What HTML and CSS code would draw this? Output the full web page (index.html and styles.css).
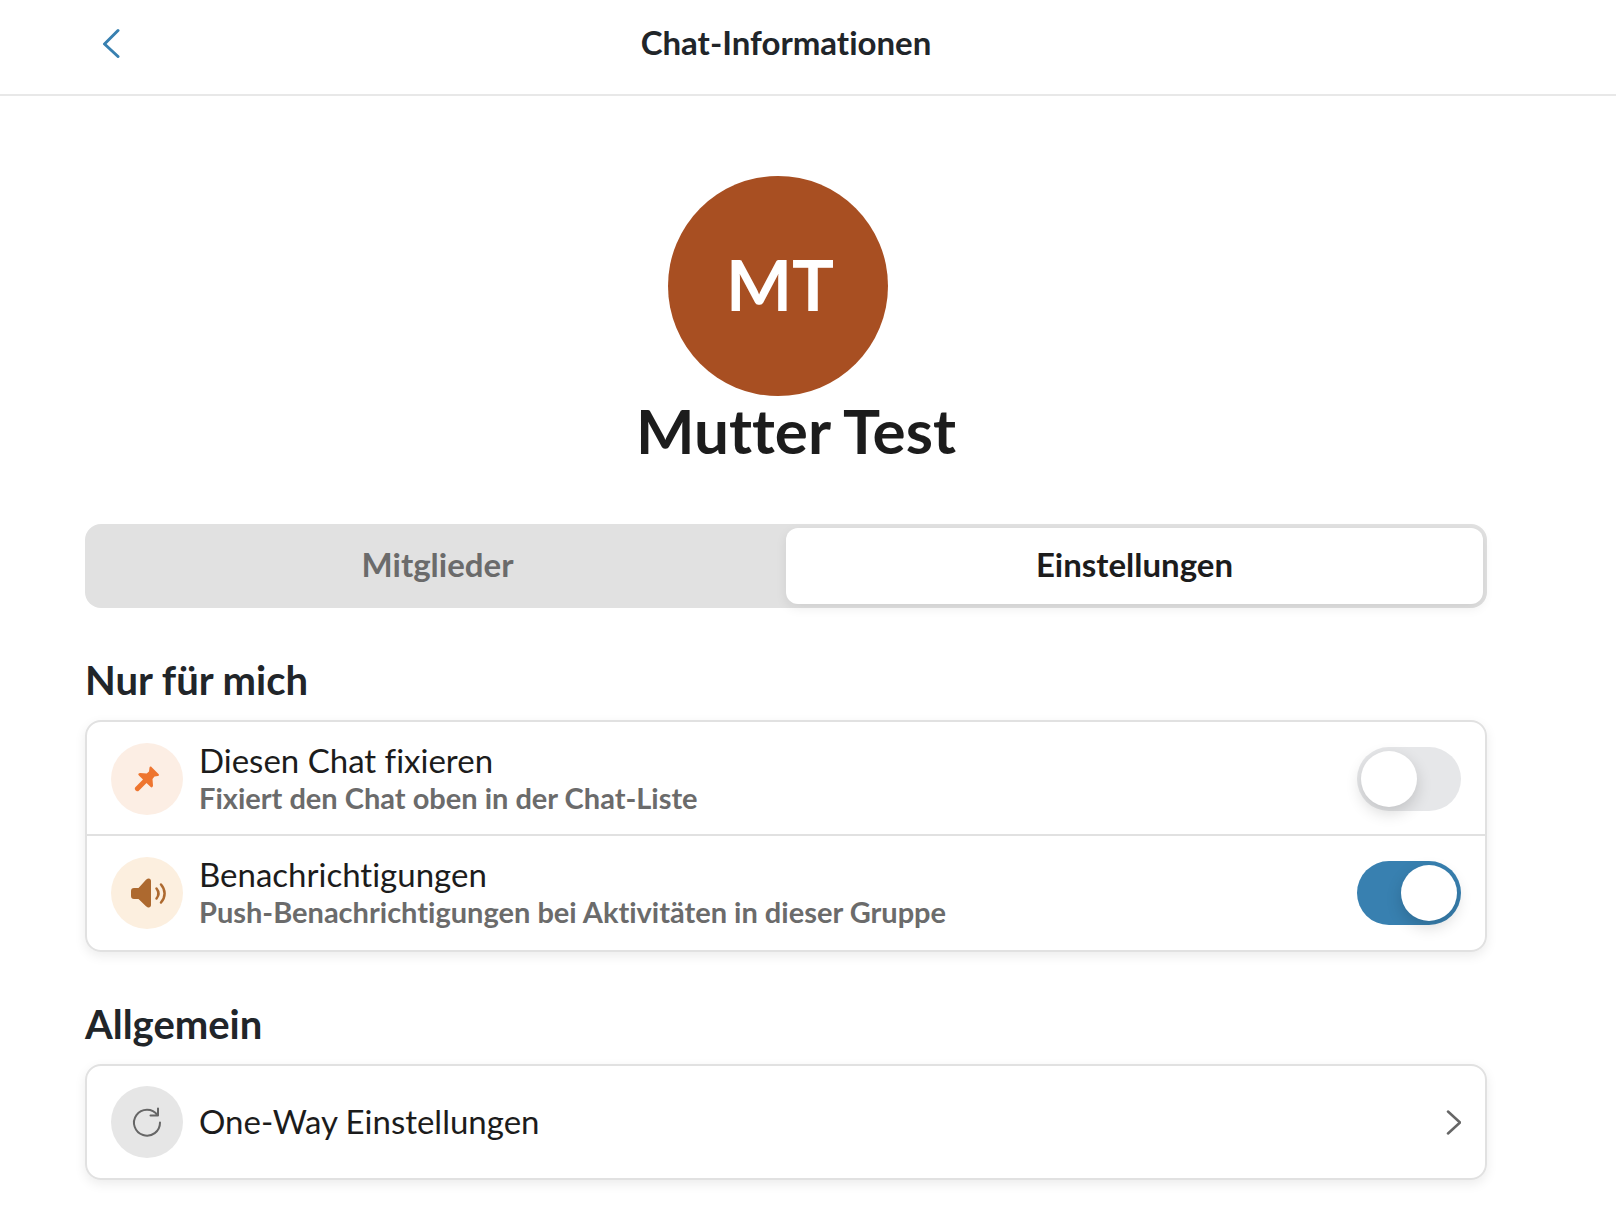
FILE: index.html
```html
<!DOCTYPE html>
<html lang="de">
<head>
  <meta charset="UTF-8">
  <meta name="viewport" content="width=device-width, initial-scale=1.0">
  <title>Chat-Informationen</title>
  <link rel="stylesheet" href="styles.css">
</head>
<body>
  <header class="topbar">
    <button type="button" class="back" aria-label="Zurück">
      <svg width="18" height="30" viewBox="0 0 18 30" fill="none" stroke="currentColor" stroke-width="3" stroke-linecap="round" stroke-linejoin="round">
        <path d="M16 2.500 2.500 16l13.500 12.500"/>
      </svg>
    </button>
    <h1 class="topbar-title">Chat-Informationen</h1>
  </header>

  <main class="content">
    <section class="profile">
      <div class="avatar">MT</div>
      <h2 class="profile-name">Mutter Test</h2>
    </section>

    <div class="tabs" role="tablist">
      <button type="button" class="tab" role="tab" aria-selected="false">Mitglieder</button>
      <button type="button" class="tab active" role="tab" aria-selected="true">Einstellungen</button>
    </div>

    <h3 class="section-title">Nur für mich</h3>
    <div class="card">
      <div class="row">
        <span class="icon icon-pin">
          <svg width="26" height="26" viewBox="0 0 26 26" fill="currentColor">
            <path d="M15.500 1.500c.3-1 1.300-1.200 2-.5l7 7c.8.8.5 1.700-.5 2l-3.500.6-2 2.400.5 6.500c0 1.500-1.300 2.500-2.300 1.500L12.500 17l-7.700 7.700c-1.800 1.800-5.300-1.500-3.500-3.500L9 13.500 4.700 9.200c-1-1 0-2.300 1.500-2.300l6.500.5 2.300-2z"/>
          </svg>
        </span>
        <label class="row-text" for="pin">
          <span class="row-title">Diesen Chat fixieren</span>
          <span class="row-sub">Fixiert den Chat oben in der Chat-Liste</span>
        </label>
        <input type="checkbox" class="switch" id="pin">
      </div>
      <div class="row">
        <span class="icon icon-sound">
          <svg width="32" height="30" viewBox="0 0 32 30">
            <path fill="currentColor" d="M3 10h4.500l7.500-8.200C17.500-.5 20 .5 20 3v24c0 2.500-2.500 3.500-5 1.200L7.500 21H3c-2 0-3-1-3-3v-5c0-2 1-3 3-3z"/>
            <path fill="none" stroke="currentColor" stroke-width="2.500" stroke-linecap="round" d="M25.500 10.500c2.400 3 2.400 7 0 10M30 6.500c4.800 5.500 4.800 12.500 0 18"/>
          </svg>
        </span>
        <label class="row-text" for="notify">
          <span class="row-title">Benachrichtigungen</span>
          <span class="row-sub">Push-Benachrichtigungen bei Aktivitäten in dieser Gruppe</span>
        </label>
        <input type="checkbox" class="switch" id="notify" checked>
      </div>
    </div>

    <h3 class="section-title">Allgemein</h3>
    <div class="card">
      <a href="#" class="row row-link">
        <span class="icon icon-refresh">
          <svg width="30" height="30" viewBox="0 0 30 30" fill="none" stroke="currentColor" stroke-width="2" stroke-linecap="round" stroke-linejoin="round">
            <path d="M28 15.500A13 13 0 1 1 25.500 8M26 1.500v7h-7.500"/>
          </svg>
        </span>
        <span class="row-text">
          <span class="row-title">One-Way Einstellungen</span>
        </span>
        <svg class="chevron" width="16" height="26" viewBox="0 0 16 26" fill="none" stroke="currentColor" stroke-width="2.500" stroke-linecap="round" stroke-linejoin="round">
          <path d="M3 2.500l12 11-12 11"/>
        </svg>
      </a>
    </div>
  </main>
</body>
</html>
```
FILE: styles.css
```css
* {
  box-sizing: border-box;
}
body {
  margin: 0;
  font-family: Lato, sans-serif;
  font-variant-ligatures: none;
  background-color: #fff;
  color: #1c1c1c;
}
h1, h2, h3 {
  margin: 0;
}
button {
  font-family: inherit;
  border: none;
  background: none;
  padding: 0;
  cursor: pointer;
}
.topbar {
  display: grid;
  grid-template-columns: 52px 1fr 52px;
  align-items: center;
  height: 96px;
  padding: 0 129px 8px 85px;
  border-bottom: 2px solid #e8e8e8;
}
.back {
  display: flex;
  justify-content: center;
  align-items: center;
  height: 48px;
  color: #3880b0;
}
.topbar-title {
  padding-bottom: 2px;
  font-size: 33px;
  font-weight: 700;
  line-height: 40px;
  text-align: center;
  color: #212529;
}
.content {
  padding: 80px 129px 44px 85px;
}
.profile {
  display: flex;
  flex-direction: column;
  align-items: center;
}
.avatar {
  display: flex;
  justify-content: center;
  align-items: center;
  width: 220px;
  height: 220px;
  margin-right: 16px;
  padding: 0 0 4px 4px;
  border-radius: 50%;
  background-color: #a84f22;
  color: #fff;
  font-size: 70px;
  font-weight: 700;
}
.profile-name {
  padding-left: 20px;
  font-size: 62px;
  font-weight: 700;
  line-height: 68px;
}
.tabs {
  display: grid;
  grid-template-columns: 1fr 1fr;
  margin-top: 60px;
  padding: 4px;
  border-radius: 16px;
  background-color: #e1e1e1;
}
.tab {
  height: 76px;
  padding-bottom: 4px;
  border-radius: 12px;
  font-size: 33px;
  font-weight: 700;
  color: #6b6b6b;
}
.tab.active {
  background-color: #fff;
  color: #1c1c1c;
  box-shadow: 0 4px 12px rgba(0, 0, 0, 0.08);
}
.section-title {
  margin: 48px 0 16px;
  font-size: 40px;
  font-weight: 700;
  line-height: 48px;
  color: #212529;
}
.card {
  border: 2px solid #e1e1e1;
  border-radius: 16px;
  box-shadow: 0 4px 12px rgba(0, 0, 0, 0.08);
}
.row {
  display: flex;
  align-items: center;
  gap: 16px;
  height: 114px;
  padding: 0 24px;
}
.row + .row {
  box-shadow: 0 -2px 0 #e1e1e1;
}
.row-link {
  height: 112px;
  color: inherit;
  text-decoration: none;
}
.icon {
  display: flex;
  justify-content: center;
  align-items: center;
  flex: none;
  width: 72px;
  height: 72px;
  border-radius: 50%;
}
.icon svg {
  overflow: visible;
}
.icon-pin {
  background-color: #fceee4;
  color: #ee752f;
}
.icon-sound {
  background-color: #fcefdf;
  color: #ad692f;
}
.icon-refresh {
  background-color: #e6e6e6;
  color: #666;
}
.row-text {
  display: flex;
  flex-direction: column;
  flex: 1;
  padding-bottom: 2px;
}
.row-title {
  font-size: 33px;
  line-height: 40px;
}
.row-sub {
  font-size: 29px;
  font-weight: 700;
  line-height: 36px;
  color: #6b6b6b;
}
.switch {
  appearance: none;
  flex: none;
  width: 104px;
  height: 64px;
  margin: 0;
  padding: 4px;
  border-radius: 32px;
  background-color: #e6e7e9;
  cursor: pointer;
}
.switch::before {
  content: "";
  display: block;
  width: 56px;
  height: 56px;
  border-radius: 50%;
  background-color: #fff;
  box-shadow: 0 6px 16px rgba(0, 0, 0, 0.16);
}
.switch:checked {
  background-color: #3880b0;
}
.switch:checked::before {
  margin-left: auto;
}
.chevron {
  color: #666;
}
```
